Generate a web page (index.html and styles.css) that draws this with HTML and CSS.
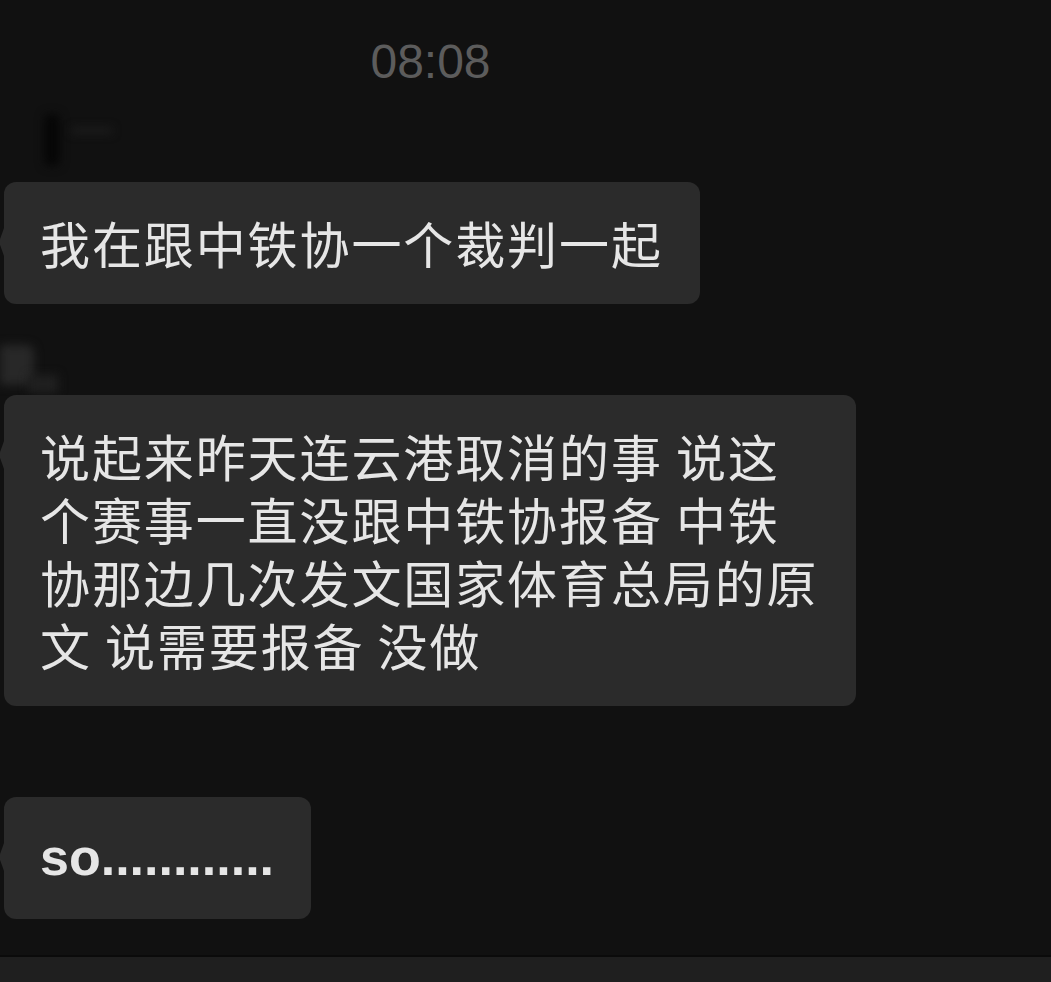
FILE: index.html
```html
<!DOCTYPE html>
<html lang="zh-CN">
<head>
  <meta charset="UTF-8">
  <meta name="viewport" content="width=device-width, initial-scale=1.0">
  <title>聊天记录</title>
  <link rel="stylesheet" href="styles.css">
</head>
<body>
  <div class="screen">
    <div class="time">08:08</div>

    <div class="thread">
      <div class="msg">
        <div class="sender">
          <span class="blur blur-dark"></span>
          <span class="blur blur-line"></span>
        </div>
        <div class="bubble">我在跟中铁协一个裁判一起</div>
      </div>

      <div class="msg">
        <div class="sender">
          <span class="blur blur-avatar"></span>
          <span class="blur blur-small"></span>
        </div>
        <div class="bubble">
          <span class="line">说起来昨天连云港取消的事 说这</span>
          <span class="line">个赛事一直没跟中铁协报备 中铁</span>
          <span class="line">协那边几次发文国家体育总局的原</span>
          <span class="line">文 说需要报备 没做</span>
        </div>
      </div>

      <div class="msg">
        <div class="sender"></div>
        <div class="bubble latin">so............</div>
      </div>
    </div>

    <div class="input-bar"></div>
  </div>
</body>
</html>
```

FILE: styles.css
```css
html, body {
    margin: 0;
    padding: 0;
    background-color: #111111;
}

.screen {
    min-height: 100vh;
    display: flex;
    flex-direction: column;
    font-family: "Noto Sans CJK SC", "Noto Sans", sans-serif;
    overflow: hidden;
}

.time {
    padding-top: 38px;
    padding-right: 190px;
    height: 48px;
    line-height: 48px;
    text-align: center;
    font-family: "Liberation Sans", Arial, sans-serif;
    font-size: 48px;
    color: #5c5c5c;
}

.thread {
    margin-top: 26px;
    display: flex;
    flex-direction: column;
    gap: 21px;
}

.msg {
    display: flex;
    flex-direction: column;
    align-items: flex-start;
}

/* what is left of the cropped avatar / nickname */
.sender {
    height: 70px;
    width: 200px;
    display: flex;
    align-items: flex-start;
}

.blur {
    display: block;
    filter: blur(5px);
}

.blur-dark {
    width: 16px;
    height: 52px;
    margin: 2px 0 0 44px;
    background: #060606;
    border-radius: 6px;
}

.blur-line {
    width: 40px;
    height: 5px;
    margin: 16px 0 0 12px;
    background: #202020;
}

.blur-avatar {
    width: 34px;
    height: 40px;
    margin-top: 20px;
    background: #282828;
    border-radius: 0 8px 8px 0;
}

.blur-small {
    width: 30px;
    height: 18px;
    margin: 50px 0 0 -6px;
    background: #202020;
}

.bubble {
    position: relative;
    margin-left: 4px;
    padding: 29px 37px 30px 36px;
    background-color: #2b2b2b;
    border-radius: 12px;
    color: #e6e6e6;
    font-size: 50px;
    line-height: 63px;
    letter-spacing: 1.9px;
    white-space: nowrap;
}

.bubble::before {
    content: "";
    position: absolute;
    left: -5px;
    top: 46px;
    border-top: 14px solid transparent;
    border-bottom: 14px solid transparent;
    border-right: 5px solid #2b2b2b;
}

.line {
    display: block;
}

.latin {
    font-family: "Liberation Sans", Arial, sans-serif;
    font-weight: bold;
    font-size: 52px;
    letter-spacing: 0;
}

.input-bar {
    margin-top: auto;
    height: 25px;
    background-color: #1f1f1f;
    border-top: 2px solid #0b0b0b;
}
```
